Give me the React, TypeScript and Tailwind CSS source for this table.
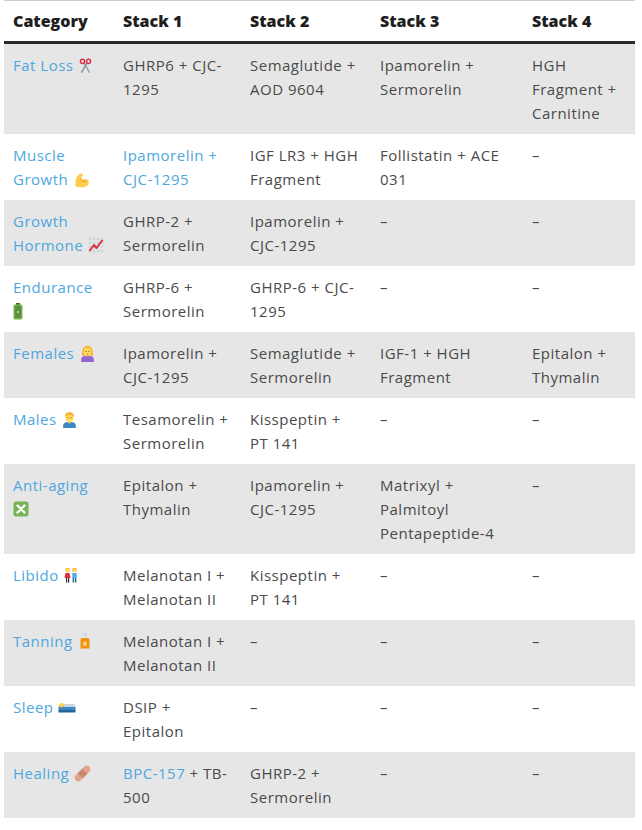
import React from "react";

const Scissors = () => (
  <svg viewBox="0 0 16 16" className="inline-block w-[15px] h-[15px] align-[-2px]">
    <line x1="6.5" y1="5.5" x2="12" y2="15" stroke="#99aab5" strokeWidth="1.8" strokeLinecap="round" />
    <line x1="9.5" y1="5.5" x2="4" y2="15" stroke="#8899a6" strokeWidth="1.8" strokeLinecap="round" />
    <circle cx="4.8" cy="3.6" r="2.2" fill="none" stroke="#dd2e44" strokeWidth="1.5" />
    <circle cx="11.2" cy="3.6" r="2.2" fill="none" stroke="#dd2e44" strokeWidth="1.5" />
  </svg>
);

const Biceps = () => (
  <svg viewBox="0 0 16 16" className="inline-block w-[17px] h-[17px] align-[-3px]">
    <path
      d="M2.5 14.5 C1.5 9 3.5 3.5 7 2.5 C9.2 2 10.2 3.8 8.6 5.4 L7.2 6.6 C7.6 9 9.4 8.2 11.2 7.6 C14.2 6.8 15.6 10 14.4 12.6 C13.3 14.8 10 15.5 6.5 15.3 Z"
      fill="#ffcc4d"
    />
    <path d="M7.2 6.6 C7.8 9.6 10 10.2 12.4 9.6" fill="none" stroke="#f4900c" strokeWidth="0.9" />
  </svg>
);

const Chart = () => (
  <svg viewBox="0 0 16 16" className="inline-block w-[16px] h-[16px] align-[-2px]">
    <g fill="#ccd6dd">
      {[2, 6, 10, 14].map((y) =>
        [2, 6, 10, 14].map((x) => <rect key={`${x}-${y}`} x={x - 1.3} y={y - 1.3} width="2.6" height="2.6" />)
      )}
    </g>
    <polyline points="1.5,14 6,8 8.5,11 14.5,3" fill="none" stroke="#dd2e44" strokeWidth="2" strokeLinejoin="round" />
  </svg>
);

const Battery = () => (
  <svg viewBox="0 0 10 17" className="inline-block w-[10px] h-[17px] align-[-3px]">
    <rect x="3" y="0" width="4" height="2" fill="#3e721d" />
    <rect x="0.5" y="1.5" width="9" height="15" rx="1.5" fill="#77b255" />
    <rect x="2" y="3" width="6" height="12" rx="1" fill="#5c913b" />
    <circle cx="5" cy="9" r="1" fill="#c6e5b3" />
  </svg>
);

const Woman = () => (
  <svg viewBox="0 0 16 16" className="inline-block w-[17px] h-[17px] align-[-3px]">
    <path d="M2 14 C2 11 4.5 10.2 8 10.2 C11.5 10.2 14 11 14 14 L14 16 L2 16 Z" fill="#9266cc" />
    <path d="M3 10 C2.5 4 4.5 0.8 8 0.8 C11.5 0.8 13.5 4 13 10 Z" fill="#ffac33" />
    <ellipse cx="8" cy="6.6" rx="3.6" ry="4" fill="#ffdc5d" />
    <circle cx="6.6" cy="6.2" r="0.5" fill="#662113" />
    <circle cx="9.4" cy="6.2" r="0.5" fill="#662113" />
    <ellipse cx="8" cy="8.8" rx="0.8" ry="0.6" fill="#c1694f" />
  </svg>
);

const Man = () => (
  <svg viewBox="0 0 16 16" className="inline-block w-[17px] h-[17px] align-[-3px]">
    <path d="M2 14 C2 11 4.5 10.4 8 10.4 C11.5 10.4 14 11 14 14 L14 16 L2 16 Z" fill="#3b88c3" />
    <rect x="6.7" y="9" width="2.6" height="2.6" fill="#f7c84b" />
    <ellipse cx="8" cy="6.2" rx="4" ry="4.3" fill="#ffdc5d" />
    <path d="M3.8 5.8 C3.6 2.4 5.6 1.2 8 1.2 C10.4 1.2 12.4 2.4 12.2 5.8 C11 4.2 9.5 3.6 8 3.6 C6.5 3.6 5 4.2 3.8 5.8 Z" fill="#ffac33" />
    <circle cx="6.6" cy="6.4" r="0.5" fill="#662113" />
    <circle cx="9.4" cy="6.4" r="0.5" fill="#662113" />
  </svg>
);

const CrossBox = () => (
  <svg viewBox="0 0 16 16" className="inline-block w-[16px] h-[16px] align-[-2px]">
    <rect x="0.5" y="0.5" width="15" height="15" rx="2.5" fill="#77b255" />
    <path d="M4.5 4.5 L11.5 11.5 M11.5 4.5 L4.5 11.5" stroke="#fff" strokeWidth="2.4" strokeLinecap="round" />
  </svg>
);

const Couple = () => (
  <svg viewBox="0 0 16 16" className="inline-block w-[16px] h-[16px] align-[-2px]">
    <circle cx="4.5" cy="3" r="2.3" fill="#ffac33" />
    <circle cx="4.5" cy="3.4" r="1.6" fill="#ffdc5d" />
    <path d="M2.5 6 L6.5 6 L7.5 11 L1.5 11 Z" fill="#dd2e44" />
    <rect x="3" y="11" width="1.2" height="4.5" fill="#292f33" />
    <rect x="5" y="11" width="1.2" height="4.5" fill="#292f33" />
    <circle cx="11.5" cy="3" r="2.3" fill="#ffac33" />
    <circle cx="11.5" cy="3.5" r="1.6" fill="#ffdc5d" />
    <rect x="9.3" y="6" width="4.4" height="5" fill="#55acee" />
    <rect x="9.6" y="11" width="1.5" height="4.5" fill="#2a6797" />
    <rect x="11.9" y="11" width="1.5" height="4.5" fill="#2a6797" />
  </svg>
);

const Lotion = () => (
  <svg viewBox="0 0 16 16" className="inline-block w-[16px] h-[16px] align-[-2px]">
    <rect x="6.8" y="0.5" width="2.4" height="3" fill="#ccd6dd" />
    <rect x="5.5" y="0.3" width="4.5" height="1.4" fill="#ccd6dd" />
    <rect x="6" y="3.2" width="4" height="2" fill="#e1e8ed" />
    <path d="M3.5 7 C3.5 5.6 4.4 5 5.5 5 L10.5 5 C11.6 5 12.5 5.6 12.5 7 L12.5 15.5 L3.5 15.5 Z" fill="#f4900c" />
    <path d="M6 11 C6 9.3 8 8 8 8 C8 8 10 9.3 10 11 C10 12.2 9.1 13 8 13 C6.9 13 6 12.2 6 11 Z" fill="#ffd983" />
  </svg>
);

const Bed = () => (
  <svg viewBox="0 0 18 16" className="inline-block w-[18px] h-[16px] align-[-2px]">
    <rect x="0.5" y="7" width="17" height="5" rx="1.5" fill="#3b88c3" />
    <rect x="0.5" y="11" width="17" height="2.5" fill="#269" />
    <circle cx="3.6" cy="6.2" r="2.3" fill="#ffcc4d" />
    <rect x="6" y="5" width="11" height="3" rx="1" fill="#ccd6dd" />
  </svg>
);

const Bandage = () => (
  <svg viewBox="0 0 16 16" className="inline-block w-[17px] h-[17px] align-[-3px]">
    <g transform="rotate(-45 8 8)">
      <rect x="-1" y="4.6" width="18" height="6.8" rx="3.4" fill="#e0a48c" />
      <rect x="5" y="4.6" width="6" height="6.8" fill="#c98a6f" />
      <circle cx="6.8" cy="6.8" r="0.5" fill="#a86b52" />
      <circle cx="9.2" cy="9.2" r="0.5" fill="#a86b52" />
    </g>
  </svg>
);

const L = ({ children }: { children: React.ReactNode }) => (
  <span className="text-[#4ea7e0]">{children}</span>
);

type Row = { cat: React.ReactNode; s: React.ReactNode[] };

const rows: Row[] = [
  {
    cat: (
      <>
        <L>Fat Loss</L> <Scissors />
      </>
    ),
    s: ["GHRP6 + CJC-1295", "Semaglutide + AOD 9604", "Ipamorelin + Sermorelin", "HGH Fragment + Carnitine"],
  },
  {
    cat: (
      <>
        <L>Muscle Growth</L> <Biceps />
      </>
    ),
    s: [<L>Ipamorelin + CJC-1295</L>, "IGF LR3 + HGH Fragment", "Follistatin + ACE 031", "–"],
  },
  {
    cat: (
      <>
        <L>Growth Hormone</L> <Chart />
      </>
    ),
    s: ["GHRP-2 + Sermorelin", "Ipamorelin + CJC-1295", "–", "–"],
  },
  {
    cat: (
      <>
        <L>Endurance</L> <Battery />
      </>
    ),
    s: ["GHRP-6 + Sermorelin", "GHRP-6 + CJC-1295", "–", "–"],
  },
  {
    cat: (
      <>
        <L>Females</L> <Woman />
      </>
    ),
    s: ["Ipamorelin + CJC-1295", "Semaglutide + Sermorelin", "IGF-1 + HGH Fragment", "Epitalon + Thymalin"],
  },
  {
    cat: (
      <>
        <L>Males</L> <Man />
      </>
    ),
    s: ["Tesamorelin + Sermorelin", "Kisspeptin + PT 141", "–", "–"],
  },
  {
    cat: (
      <>
        <L>Anti-aging</L> <CrossBox />
      </>
    ),
    s: ["Epitalon + Thymalin", "Ipamorelin + CJC-1295", "Matrixyl + Palmitoyl Pentapeptide-4", "–"],
  },
  {
    cat: (
      <>
        <L>Libido</L> <Couple />
      </>
    ),
    s: ["Melanotan I + Melanotan II", "Kisspeptin + PT 141", "–", "–"],
  },
  {
    cat: (
      <>
        <L>Tanning</L> <Lotion />
      </>
    ),
    s: ["Melanotan I + Melanotan II", "–", "–", "–"],
  },
  {
    cat: (
      <>
        <L>Sleep</L> <Bed />
      </>
    ),
    s: ["DSIP + Epitalon", "–", "–", "–"],
  },
  {
    cat: (
      <>
        <L>Healing</L> <Bandage />
      </>
    ),
    s: [
      <>
        <L>BPC-157</L> + TB-500
      </>,
      "GHRP-2 + Sermorelin",
      "–",
      "–",
    ],
  },
];

const App = () => {
  return (
    <div className="w-[642px] h-[830px] bg-white pl-[4px] font-['Open_Sans',sans-serif]">
      <table className="table-fixed w-[631px] border-collapse border-t border-t-[#cfcfcf] text-[15px] leading-[24px] tracking-[0.5px] text-[#4a4a4a]">
        <colgroup>
          <col className="w-[110px]" />
          <col className="w-[127px]" />
          <col className="w-[130px]" />
          <col className="w-[152px]" />
          <col className="w-[112px]" />
        </colgroup>
        {/* Header */}
        <thead>
          <tr className="border-b-[3px] border-b-[#2a2a2a] text-left text-[#1e1e1e] text-[16px] tracking-normal">
            <th className="px-[9px] h-[42px] align-middle font-extrabold">Category</th>
            <th className="px-[9px] align-middle font-extrabold">Stack 1</th>
            <th className="px-[9px] align-middle font-extrabold">Stack 2</th>
            <th className="px-[9px] align-middle font-extrabold">Stack 3</th>
            <th className="px-[9px] align-middle font-extrabold">Stack 4</th>
          </tr>
        </thead>
        <tbody>
          {rows.map((r, i) => (
            <tr key={i} className={i % 2 === 0 ? "bg-[#e6e6e6]" : "bg-white"}>
              <td className="px-[9px] py-[9px] align-top">{r.cat}</td>
              {r.s.map((c, j) => (
                <td key={j} className="px-[9px] py-[9px] align-top">
                  {c}
                </td>
              ))}
            </tr>
          ))}
        </tbody>
      </table>
    </div>
  );
};

export default App;
